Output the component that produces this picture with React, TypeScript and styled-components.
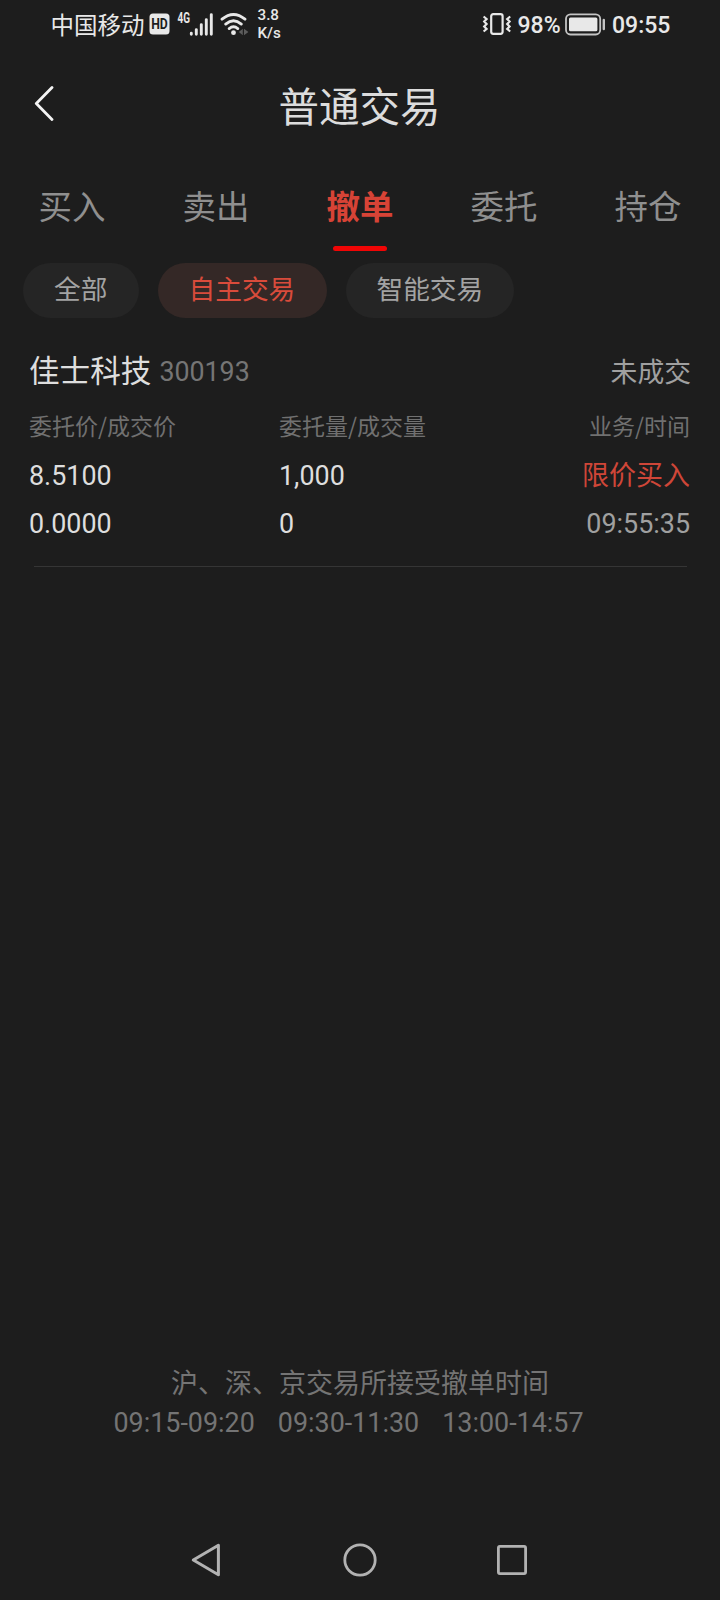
import React from "react";
import styled, { createGlobalStyle } from "styled-components";

const Global = createGlobalStyle`
  * { box-sizing: border-box; }
  html, body { margin: 0; background: #1d1d1d; }
  body { font-family: "Noto Sans CJK SC", Roboto, sans-serif; }
`;

const Screen = styled.div`
  width: 720px;
  height: 1600px;
  display: flex;
  flex-direction: column;
  background: #1d1d1d;
  color: #dcdcdc;
  overflow: hidden;
`;

const StatusBar = styled.header`
  height: 48px;
  padding: 0 50px 0 50.5px;
  display: flex;
  justify-content: space-between;
  align-items: center;
  color: #e8e8e8;
`;

const StatusGroup = styled.div`
  display: flex;
  align-items: center;
  height: 48px;
  svg { display: block; }
`;

const Carrier = styled.span`
  width: 98.5px;
  font-size: 23.5px;
  line-height: 48px;
  white-space: nowrap;
`;

const StatusText = styled.span<{ $w: number }>`
  width: ${(p) => p.$w}px;
  margin-left: 5.5px;
  font: 500 23px/48px Roboto, sans-serif;
  padding-top: 3px;
  white-space: nowrap;
`;

const Speed = styled.div`
  display: flex;
  flex-direction: column;
  margin-left: 9px;
  font: 500 15.2px/18px Roboto, sans-serif;
`;

const TitleBar = styled.div`
  height: 112px;
  padding: 0 34px;
  display: grid;
  grid-template-columns: 60px 1fr 60px;
  grid-template-rows: 112px;
  align-items: center;
`;

const BackButton = styled.button`
  width: 22px;
  height: 38px;
  margin-top: 1px;
  padding: 0;
  border: 0;
  background: none;
  svg { display: block; }
`;

const Title = styled.h1`
  margin: 2px 1px 0 0;
  text-align: center;
  font-size: 40.5px;
  font-weight: 400;
  line-height: 110px;
`;

const Tabs = styled.nav`
  height: 95px;
  display: grid;
  grid-template-columns: repeat(5, 144px);
`;

const Tab = styled.button<{ $active?: boolean }>`
  padding: 0;
  border: 0;
  background: none;
  display: flex;
  flex-direction: column;
  align-items: center;
  font: ${(p) => (p.$active ? 700 : 400)} 33.5px/90px "Noto Sans CJK SC", sans-serif;
  color: ${(p) => (p.$active ? "#d74336" : "#8f8f8f")};
  &::after {
    content: "";
    width: 54px;
    height: 5px;
    margin-top: -4px;
    border-radius: 2.5px;
    background: ${(p) => (p.$active ? "#f00505" : "transparent")};
  }
`;

const Chips = styled.div`
  display: flex;
  gap: 19px;
  height: 55px;
  margin-top: 8px;
  padding-left: 23px;
`;

const Chip = styled.button<{ $active?: boolean }>`
  height: 55px;
  padding: 0 31.2px 5px 31px;
  border: 0;
  border-radius: 28px;
  font: 400 26.7px/50px "Noto Sans CJK SC", sans-serif;
  white-space: nowrap;
  background: ${(p) => (p.$active ? "#342826" : "#252525")};
  color: ${(p) => (p.$active ? "#d94b3b" : "#a3a3a3")};
`;

const Order = styled.article`
  margin: 22px 30px 0 29px;
`;

const OrderHead = styled.div`
  height: 60px;
  display: flex;
  justify-content: space-between;
  align-items: center;
`;

const StockTitle = styled.div`
  display: flex;
  align-items: center;
  gap: 8px;
`;

const StockName = styled.span`
  padding-bottom: 2px;
  font-size: 30.6px;
  line-height: 58px;
  color: #dedede;
`;

const StockCode = styled.span`
  padding-top: 3px;
  font: 400 26.8px/60px Roboto, sans-serif;
  color: #757575;
`;

const State = styled.span`
  margin: 1px -1px 0 0;
  font-size: 26.8px;
  line-height: 60px;
  color: #a0a0a0;
`;

const Row = styled.div<{ $h: number; $gap?: number }>`
  height: ${(p) => p.$h}px;
  margin-bottom: ${(p) => p.$gap ?? 0}px;
  display: grid;
  grid-template-columns: 250px 1fr 150px;
  align-items: center;
`;

const Label = styled.span`
  font-size: 23px;
  line-height: 50px;
  color: #707070;
`;

const Value = styled.span<{ $dim?: boolean }>`
  font: 400 26.9px/48px Roboto, sans-serif;
  color: ${(p) => (p.$dim ? "#a0a0a0" : "#dedede")};
`;

const Side = styled.span`
  margin-bottom: 4px;
  font-size: 27px;
  line-height: 44px;
  color: #cf4638;
`;

const RightCell = styled.div`
  display: flex;
  justify-content: flex-end;
`;

const Divider = styled.hr`
  height: 1px;
  margin: 18px 3px 0 5px;
  border: 0;
  background: #353535;
`;

const Notice = styled.footer`
  margin-top: auto;
  height: 158px;
  display: flex;
  flex-direction: column;
  align-items: center;
  gap: 3px;
  color: #747474;
`;

const NoticeText = styled.p`
  margin: 0;
  font-size: 27px;
  line-height: 39px;
`;

const Hours = styled.div`
  display: flex;
  gap: 23px;
  margin-right: 23px;
  font: 400 26.9px/39px Roboto, sans-serif;
`;

const SystemNav = styled.nav`
  height: 80px;
  padding: 0 192px 0 191px;
  display: flex;
  justify-content: space-between;
  align-items: center;
  svg { display: block; }
  svg:nth-child(2) { margin-left: 3px; }
`;

const HdIcon = () => (
  <svg width="21" height="22" viewBox="0 0 21 22">
    <rect x="0.5" y="0.5" width="20" height="21" rx="3.5" fill="#e8e8e8" />
    <text x="2.2" y="16.2" textLength="16.6" lengthAdjust="spacingAndGlyphs" fontFamily="Roboto" fontWeight="700" fontSize="14.5" fill="#1d1d1d">HD</text>
  </svg>
);

const SignalIcon = () => (
  <svg width="38" height="26" viewBox="0 0 38 26" style={{ marginLeft: 5.5 }}>
    <text x="1.5" y="12.2" textLength="12.5" lengthAdjust="spacingAndGlyphs" fontFamily="Roboto" fontWeight="700" fontSize="14" fill="#e8e8e8">4G</text>
    <g stroke="#e8e8e8" strokeWidth="2.9" strokeLinecap="round">
      <path d="M15.3 22.3v1M20.3 18.6v4.7M25.3 13.6v9.7M30.3 8.6v14.7M35.3 3.6v19.7" />
    </g>
  </svg>
);

const WifiIcon = () => (
  <svg width="29" height="24" viewBox="0 0 29 24" style={{ marginLeft: 6 }}>
    <g fill="none" stroke="#e8e8e8" strokeWidth="2.8" strokeLinecap="round">
      <path d="M2 7.2Q13.5-2.3 25 7.2M5.7 12.1Q13.5 5.5 21.3 12.1M9.2 16.6Q13.5 13 17.8 16.6" />
    </g>
    <circle cx="13.5" cy="20.7" r="2.4" fill="#e8e8e8" />
    <path d="M22.8 16.8v6.4L18.8 20zM24 16.8v6.4L28.4 20z" fill="#5c5c5c" />
  </svg>
);

const VibrateIcon = () => (
  <svg width="30" height="24" viewBox="0 0 30 24">
    <rect x="9.2" y="2.2" width="11.4" height="19.6" rx="2" fill="none" stroke="#e8e8e8" strokeWidth="2.2" />
    <path d="M1.6 4.5l3 2.5-2.4 2.5 2.4 2.5-2.4 2.5 2.4 2.5-3 2.5M28.2 4.5l-3 2.5 2.4 2.5-2.4 2.5 2.4 2.5-2.4 2.5 3 2.5" fill="none" stroke="#e8e8e8" strokeWidth="2.2" />
  </svg>
);

const BatteryIcon = () => (
  <svg width="42" height="24" viewBox="0 0 42 24">
    <rect x="1" y="2.3" width="34.2" height="20.2" rx="4.5" fill="none" stroke="#c4c4c4" strokeWidth="1.8" />
    <rect x="4" y="5.6" width="28.4" height="13.6" rx="1.5" fill="#e8e8e8" />
    <path d="M38.8 8v9" stroke="#c4c4c4" strokeWidth="2.4" strokeLinecap="round" />
  </svg>
);

const tabs = ["买入", "卖出", "撤单", "委托", "持仓"];
const chips = ["全部", "自主交易", "智能交易"];
const hours = ["09:15-09:20", "09:30-11:30", "13:00-14:57"];

export default function App() {
  return (
    <>
      <Global />
      <Screen>
        <StatusBar>
          <StatusGroup>
            <Carrier>中国移动</Carrier>
            <HdIcon />
            <SignalIcon />
            <WifiIcon />
            <Speed>
              <span>3.8</span>
              <span>K/s</span>
            </Speed>
          </StatusGroup>
          <StatusGroup>
            <VibrateIcon />
            <StatusText $w={47}>98%</StatusText>
            <BatteryIcon />
            <StatusText $w={58}>09:55</StatusText>
          </StatusGroup>
        </StatusBar>
        <TitleBar>
          <BackButton aria-label="返回">
            <svg width="22" height="38" viewBox="0 0 22 38" fill="none" stroke="#f4f4f4" strokeWidth="2.8" strokeLinecap="round" strokeLinejoin="round">
              <path d="M18 1.6L2.3 17.6 18 33.6" />
            </svg>
          </BackButton>
          <Title>普通交易</Title>
        </TitleBar>
        <Tabs>
          {tabs.map((t) => (
            <Tab key={t} $active={t === "撤单"}>{t}</Tab>
          ))}
        </Tabs>
        <Chips>
          {chips.map((c) => (
            <Chip key={c} $active={c === "自主交易"}>{c}</Chip>
          ))}
        </Chips>
        <Order>
          <OrderHead>
            <StockTitle>
              <StockName>佳士科技</StockName>
              <StockCode>300193</StockCode>
            </StockTitle>
            <State>未成交</State>
          </OrderHead>
          <Row $h={50} $gap={2}>
            <Label>委托价/成交价</Label>
            <Label>委托量/成交量</Label>
            <RightCell><Label>业务/时间</Label></RightCell>
          </Row>
          <Row $h={48}>
            <Value>8.5100</Value>
            <Value>1,000</Value>
            <RightCell><Side>限价买入</Side></RightCell>
          </Row>
          <Row $h={48}>
            <Value>0.0000</Value>
            <Value>0</Value>
            <RightCell><Value $dim>09:55:35</Value></RightCell>
          </Row>
          <Divider />
        </Order>
        <Notice>
          <NoticeText>沪、深、京交易所接受撤单时间</NoticeText>
          <Hours>
            {hours.map((h) => (
              <span key={h}>{h}</span>
            ))}
          </Hours>
        </Notice>
        <SystemNav>
          <svg width="30" height="36" viewBox="0 0 30 36" fill="none" stroke="#b2b2b2" strokeWidth="3" strokeLinejoin="round">
            <path d="M27.4 3.2v29.6L2.3 18z" />
          </svg>
          <svg width="34" height="34" viewBox="0 0 34 34" fill="none" stroke="#b2b2b2" strokeWidth="2.8">
            <circle cx="17" cy="17" r="15.2" />
          </svg>
          <svg width="32" height="32" viewBox="0 0 32 32" fill="none" stroke="#b2b2b2" strokeWidth="2.8">
            <rect x="2.4" y="2.4" width="27.2" height="27.2" rx="1.5" />
          </svg>
        </SystemNav>
      </Screen>
    </>
  );
}
